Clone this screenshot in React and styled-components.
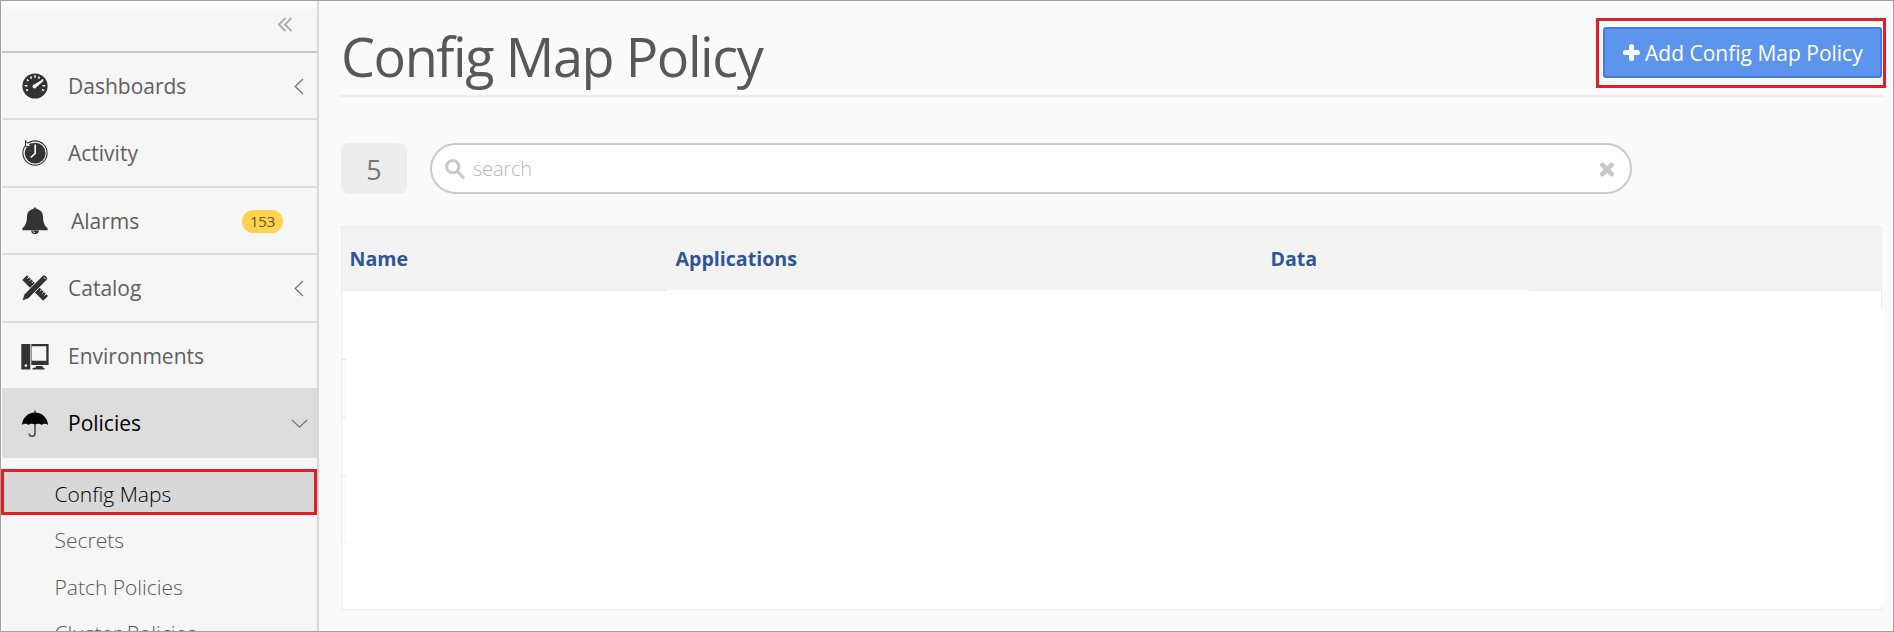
import React from 'react';
import styled, { createGlobalStyle, css } from 'styled-components';

const Global = createGlobalStyle`
  * { box-sizing: border-box; }
  body { margin: 0; background: #fafafa; }
  button { font: inherit; }
`;

const Frame = styled.div`
  display: flex;
  height: 632px;
  overflow: hidden;
  border: 1px solid #a0a0a0;
  background: #fafafa;
  color: #585858;
  font-family: 'Open Sans', 'Noto Sans', sans-serif;
`;

const Sidebar = styled.nav`
  flex: none;
  width: 318px;
  display: flex;
  flex-direction: column;
  border-left: 1px solid #fff;
  border-right: 2px solid #d8d8d8;
  background: #f6f6f6;
`;

const SidebarTop = styled.div`
  flex: none;
  height: 52px;
  display: flex;
  justify-content: flex-end;
  align-items: flex-start;
  padding: 16px 24px 0 0;
  border-bottom: 2px solid #c5c5ca;
  background: linear-gradient(#fcfcfc, #f6f6f6 12px);
`;

const NavItem = styled.div`
  flex: none;
  display: flex;
  align-items: center;
  height: ${(p) => p.$height}px;
  padding: ${(p) => (p.$height % 2 ? 1 : 0)}px ${(p) => (p.$active ? 9 : 13)}px 0 19px;
  border-bottom: ${(p) => (p.$last ? 0 : 2)}px solid #dcdcdc;
  color: #606060;
  font-size: 21px;
  font-weight: 400;
  line-height: 30px;
  ${(p) => p.$active && css`
    background: #dcdcdc;
    color: #000;
  `}
`;

const NavIcon = styled.span`
  flex: none;
  display: flex;
  width: 28px;
  color: ${(p) => (p.$active ? '#000' : '#333')};
`;

const NavLabel = styled.span`
  flex: 1;
  padding: 0 0 ${(p) => (p.$raised ? 2 : 0)}px ${(p) => (p.$indent ? 22 : 19)}px;
`;

const CountPill = styled.span`
  width: 41px;
  height: 23px;
  margin-right: 21px;
  border-radius: 12px;
  background: #ffd24f;
  color: #6a5516;
  font-size: 15px;
  font-weight: 400;
  letter-spacing: -0.2px;
  line-height: 22px;
  text-align: center;
`;

const SubMenu = styled.div`
  flex: none;
  padding-top: 11px;
`;

const SubItem = styled.div`
  height: 46.5px;
  padding: 0 0 0 52.5px;
  font-size: 21px;
  font-weight: 300;
  line-height: 47px;
  ${(p) => p.$selected && css`
    height: 46px;
    margin: 0 0 2px -1px;
    padding-left: 50.5px;
    border: 3px solid #e41e26;
    background: #d8d8d8;
    color: #000;
    line-height: 44px;
  `}
`;

const Main = styled.main`
  flex: 1;
  display: flex;
  flex-direction: column;
  padding: 0 10px 0 22px;
`;

const PageHeader = styled.header`
  flex: none;
  display: flex;
  justify-content: space-between;
  height: 96px;
  border-bottom: 2px solid #ececec;
`;

const Title = styled.h1`
  margin: 0;
  padding-top: 18px;
  font-size: 54px;
  font-weight: 400;
  line-height: 74px;
  letter-spacing: -1.42px;
`;

const Highlight = styled.div`
  width: 290px;
  height: 70px;
  margin: 17px -3px 0 0;
  padding: 6px 4px;
  border: 3px solid #e41e26;
`;

const AddButton = styled.button`
  display: flex;
  align-items: center;
  gap: 5px;
  width: 279px;
  height: 51px;
  padding: 0 0 0 18px;
  border: 2px solid #4479e6;
  border-radius: 3px;
  background: #5e95ec;
  color: #fff;
  font-size: 21px;
  white-space: nowrap;
`;

const FilterBar = styled.div`
  flex: none;
  display: flex;
  gap: 23px;
  padding: 46px 0 32px;
`;

const Total = styled.div`
  width: 66px;
  height: 51px;
  border-radius: 8px;
  background: #ededed;
  color: #777;
  font-size: 27px;
  font-weight: 400;
  line-height: 53px;
  text-align: center;
`;

const SearchBox = styled.div`
  display: flex;
  align-items: center;
  width: 1202px;
  height: 51px;
  padding: 0 15px 0 13px;
  border: 2px solid #cacaca;
  border-radius: 26px;
  background: #fff;
  color: #b8b8b8;
  font-size: 20px;
  font-weight: 300;
`;

const SearchText = styled.span`
  flex: 1;
  padding: 0 0 1px 8px;
  letter-spacing: -0.2px;
`;

const Table = styled.section`
  position: relative;
  flex: none;
  width: 1541px;
  border: 1px solid #ebebeb;
  background: #fff;
`;

const HeadRow = styled.div`
  display: grid;
  grid-template-columns: 326px 595px 1fr;
  height: 64px;
  border-bottom: 1px solid #ebebeb;
  background: #f3f3f3;
  color: #2f5597;
  font-size: 19.6px;
  font-weight: 700;
  line-height: 64px;
`;

const HeadCell = styled.div`
  padding-left: 7.5px;
`;

const Row = styled.div`
  height: ${(p) => p.$height}px;
  border-bottom: ${(p) => (p.$last ? 0 : 1)}px solid #ebebeb;
  background: ${(p) => (p.$striped ? '#fafafa' : '#fff')};
`;

/* Blank panel laid over the table's rows. */
const Cover = styled.div`
  position: absolute;
  left: ${(p) => p.$left}px;
  top: ${(p) => p.$top}px;
  width: ${(p) => p.$width}px;
  height: ${(p) => p.$height}px;
  background: #fff;
`;

const GaugeIcon = () => (
  <svg width="28" height="28" viewBox="0 0 28 28">
    <circle cx="14" cy="14" r="12.6" fill="currentColor" />
    <g stroke="#f5f5f5" strokeWidth="1.6">
      <path d="M14 3.3v2.4M9.6 4.6l.9 2M18.4 4.6l-.9 2M5.9 7.5l1.6 1.5M22.1 7.5l-1.6 1.5M3.8 13.8h2.6M21.6 13.8h2.6M5 18.6l2-.8M23 18.6l-2-.8" />
    </g>
    <path d="M22.3 8.9l-1-1.2-8.3 4.8a2 2 0 1 0 2.2 3z" fill="#f5f5f5" />
  </svg>
);

const HistoryIcon = () => (
  <svg width="28" height="28" viewBox="0 0 28 28" fill="none">
    <circle cx="14" cy="14" r="12.1" stroke="currentColor" strokeWidth="1.1" />
    <circle cx="14.2" cy="14.2" r="10.4" fill="currentColor" />
    <path d="M4.5 1.5v5.9h5.9L8.3 5.6l1.5-1.1-1.3-1.5-1.9 1.3z" fill="#f5f5f5" stroke="currentColor" strokeWidth="1" />
    <path d="M14.2 5.5v8.8l-4.4 4.2" stroke="#f5f5f5" strokeWidth="1.7" />
  </svg>
);

const BellIcon = () => (
  <svg width="28" height="28" viewBox="0 0 28 28">
    <path d="M14 .6c.9 0 1.4.6 1.4 1.4 4.5.7 6.4 3.6 6.6 7.6.2 5 .7 8.4 4.6 11.6v2H1.400v-2C5.300 18 5.800 14.600 6 9.600c.2-4 2.100-6.900 6.600-7.600 0-.8.500-1.400 1.400-1.400z" fill="currentColor" />
    <path d="M10.200 23.600a3.800 3.600 0 0 0 7.600 0z" fill="currentColor" />
    <path d="M12 24.200a2 2 0 0 0 2 1.500" fill="none" stroke="#f5f5f5" strokeWidth=".9" />
  </svg>
);

const ToolsIcon = () => (
  <svg width="28" height="28" viewBox="0 0 28 28">
    <path d="M6 1.200L27 22l-4.800 4.800L1.200 6z" fill="currentColor" />
    <path d="M8 3L6.400 4.600M10.200 5.200L8.600 6.800M12.400 7.400l-1.600 1.600M20.600 15.600L19 17.200M22.800 17.800l-1.600 1.600M25 20l-1.600 1.600" stroke="#f5f5f5" strokeWidth="1" />
    <path d="M21.800 1.400c1.800-1.700 6 2.500 4.300 4.300L7.300 24.800.9 27l2.100-6.600z" fill="currentColor" stroke="#f5f5f5" strokeWidth=".9" />
    <path d="M22.800 3.200l1.800 1.800" stroke="#f5f5f5" strokeWidth="1" />
  </svg>
);

const ComputerIcon = () => (
  <svg width="28" height="28" viewBox="0 -1 28 28" fill="currentColor">
    <path d="M.3 1h9v25.500h-9z" />
    <circle cx="4.900" cy="22.600" r="1.300" fill="#f5f5f5" />
    <path fillRule="evenodd" d="M10.300 1h17.300v21H10.300zM10.800 3.300v14.400h14.500V3.300zM15 23h6.500v1.200l2 1v1.300H11.500v-1.300l3.500-1z" />
  </svg>
);

const UmbrellaIcon = () => (
  <svg width="28" height="28" viewBox="0 0 28 28">
    <path d="M14 .5v3M14 13v10.500c0 3.600-5.600 3.800-6 0" fill="none" stroke="#444" strokeWidth="1.500" />
    <path d="M1 15C1.200 8 7 2.500 14 2.500S26.800 8 27 15c-1.500-1.700-5-1.700-6.400 0-1.500-1.700-5-1.700-6.600-.4-1.600-1.300-5.100-1.300-6.600.4C6 13.300 2.500 13.300 1 15z" fill="currentColor" />
  </svg>
);

const CollapseIcon = () => (
  <svg width="16" height="16" viewBox="0 0 16 16" fill="none" stroke="#adadad" strokeWidth="2">
    <path d="M8.500 1L2 7.500 8.500 14M14.500 1L8 7.500l6.500 6.500" />
  </svg>
);

const ChevronLeft = () => (
  <svg width="10" height="17" viewBox="0 0 10 17" fill="none" stroke="#777" strokeWidth="1.300">
    <path d="M9 1L1.200 8.500 9 16" />
  </svg>
);

const ChevronDown = () => (
  <svg width="17" height="10" viewBox="0 0 17 10" fill="none" stroke="#777" strokeWidth="1.300">
    <path d="M1 1l7.500 7.200L16 1" />
  </svg>
);

const PlusIcon = () => (
  <svg width="17" height="17" viewBox="0 0 17 17">
    <path d="M8.500 2.500v12M2.500 8.500h12" stroke="#fff" strokeWidth="5" strokeLinecap="round" />
  </svg>
);

const SearchIcon = () => (
  <svg width="20" height="23" viewBox="0 -2 20 23" fill="none" stroke="#c8c8c8">
    <circle cx="7.700" cy="7.700" r="6.100" strokeWidth="3" />
    <path d="M12 12l7 7.500" strokeWidth="3.200" />
  </svg>
);

const ClearIcon = () => (
  <svg width="16" height="16" viewBox="0 0 16 16">
    <path d="M3.500 4l9 9M12.500 4l-9 9" stroke="#c8c8c8" strokeWidth="4.800" strokeLinecap="round" />
  </svg>
);

const items = [
  { label: 'Dashboards', Icon: GaugeIcon, height: 67, chevron: true },
  { label: 'Activity', Icon: HistoryIcon, height: 68 },
  { label: 'Alarms', Icon: BellIcon, height: 67, count: 153 },
  { label: 'Catalog', Icon: ToolsIcon, height: 68, chevron: true },
  { label: 'Environments', Icon: ComputerIcon, height: 67 },
];

const rows = [69, 58, 58, 67, 66];

export default function App() {
  return (
    <>
      <Global />
      <Frame>
        <Sidebar>
          <SidebarTop><CollapseIcon /></SidebarTop>
          {items.map(({ label, Icon, height, chevron, count }) => (
            <NavItem key={label} $height={height}>
              <NavIcon><Icon /></NavIcon>
              <NavLabel $indent={!!count}>{label}</NavLabel>
              {count && <CountPill>{count}</CountPill>}
              {chevron && <ChevronLeft />}
            </NavItem>
          ))}
          <NavItem $height={68} $active $last>
            <NavIcon $active><UmbrellaIcon /></NavIcon>
            <NavLabel $raised>Policies</NavLabel>
            <ChevronDown />
          </NavItem>
          <SubMenu>
            <SubItem $selected>Config Maps</SubItem>
            <SubItem>Secrets</SubItem>
            <SubItem>Patch Policies</SubItem>
            <SubItem>Cluster Policies</SubItem>
          </SubMenu>
        </Sidebar>
        <Main>
          <PageHeader>
            <Title>Config Map Policy</Title>
            <Highlight>
              <AddButton><PlusIcon />Add Config Map Policy</AddButton>
            </Highlight>
          </PageHeader>
          <FilterBar>
            <Total>5</Total>
            <SearchBox>
              <SearchIcon />
              <SearchText>search</SearchText>
              <ClearIcon />
            </SearchBox>
          </FilterBar>
          <Table>
            <HeadRow>
              <HeadCell>Name</HeadCell>
              <HeadCell>Applications</HeadCell>
              <HeadCell>Data</HeadCell>
            </HeadRow>
            {rows.map((height, i) => (
              <Row key={i} $height={height} $striped={i % 2 === 1} $last={i === rows.length - 1} />
            ))}
            <Cover $left={325} $top={63} $width={862} $height={30} />
            <Cover $left={4} $top={82} $width={1538} $height={296} />
          </Table>
        </Main>
      </Frame>
    </>
  );
}
